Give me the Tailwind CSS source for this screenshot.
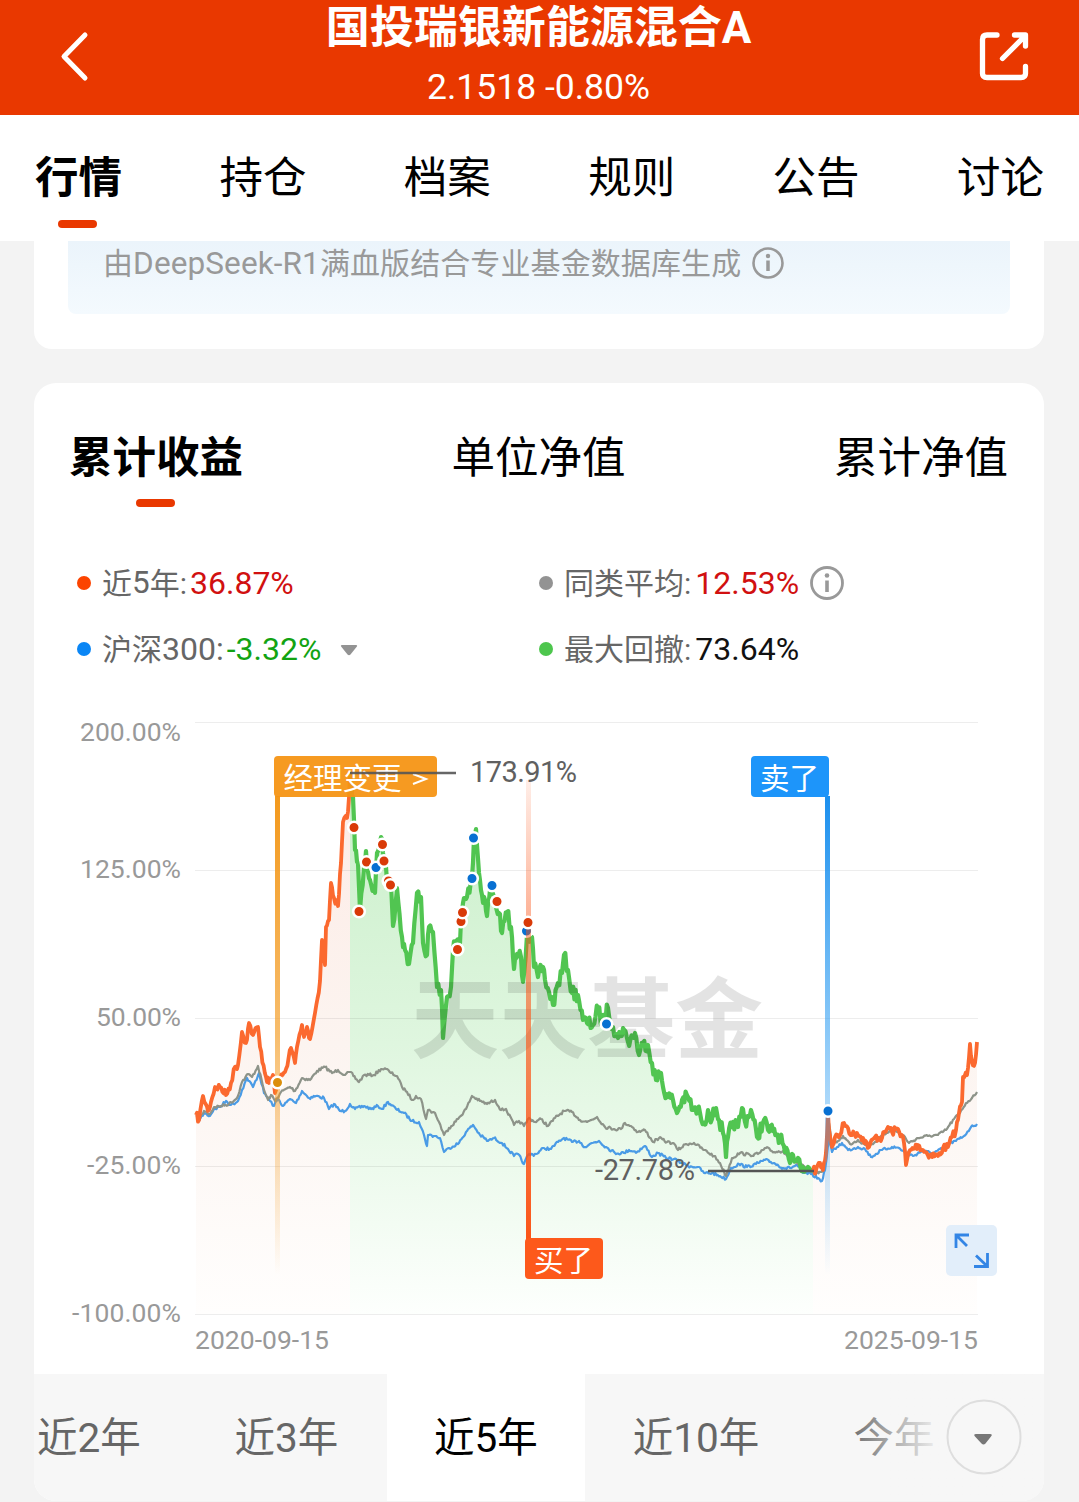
<!DOCTYPE html>
<html lang="zh-CN">

<head>
    <meta charset="UTF-8">
    <meta name="viewport" content="width=device-width, initial-scale=1.0">
    <title>国投瑞银新能源混合A</title>
    <script src="https://cdn.jsdelivr.net/npm/@tailwindcss/browser@4"></script>
</head>

<body class="bg-[#f3f3f3] w-full h-[1502px] overflow-hidden font-[Roboto,'Noto_Sans_CJK_SC',sans-serif]">
    <!-- Header -->
    <header class="h-[115px] bg-[#e93800] text-white flex justify-between">
        <svg class="w-[110px] h-[115px]" viewBox="0 0 110 115" fill="none" stroke="white" stroke-width="5" stroke-linecap="round" stroke-linejoin="round">
            <path d="M85 35 64 56.5 85 78" />
        </svg>
        <div class="flex flex-col items-center -ml-[2px]">
            <h1 class="pt-[2px] text-[44px] leading-[52px] font-bold whitespace-nowrap">国投瑞银新能源混合A</h1>
            <p class="mt-[12px] text-[35.500px] leading-[43px] whitespace-nowrap">2.1518 -0.80%</p>
        </div>
        <svg class="w-[110px] h-[115px]" viewBox="969 0 110 115" fill="none" stroke="white" stroke-width="5.300" stroke-linecap="round" stroke-linejoin="round">
            <path d="M997 35H987Q982.500 35 982.500 39.500V73.500Q982.500 77.500 987 77.500H1021Q1025.500 77.500 1025.500 73.500V66.500M1002.500 58.500 1025 36M1014.500 35H1025.500V46" />
        </svg>
    </header>

    <!-- Main tabs -->
    <nav class="h-[126px] bg-white px-[35px] pt-[36px] flex justify-between items-start text-black text-[43.500px] leading-[56px]">
        <a class="font-bold flex flex-col items-center">行情<i class="block mt-[13px] -ml-[2px] w-[39px] h-[8px] rounded-full bg-[#e93800]"></i></a>
        <a>持仓</a>
        <a>档案</a>
        <a>规则</a>
        <a>公告</a>
        <a>讨论</a>
    </nav>

    <main class="px-[34px] pr-[35px]">
        <section class="bg-white h-[108px] rounded-b-[18px] px-[34px]">
            <div class="h-[73px] rounded-b-[8px] bg-linear-to-b from-[#ebf4fb] to-[#f4fafe] pl-[35px] flex items-start gap-[10px] text-[#999]">
                <span class="text-[30px] leading-[46px] tracking-[0.1px]">由<span class="text-[31.500px]">DeepSeek-R1</span>满血版结合专业基金数据库生成</span>
                <svg class="w-[34px] h-[34px] mt-[5px]" viewBox="0 0 34 34" fill="none" stroke="#999" stroke-width="2.600">
                    <circle cx="17" cy="17" r="14.500" />
                    <path d="M17 14.500V25" stroke-width="3.500" />
                    <circle cx="17" cy="10" r="2.200" fill="#999" stroke="none" />
                </svg>
            </div>
        </section>

        <section class="mt-[34px] bg-white h-[1118px] rounded-[22px] overflow-hidden flex flex-col">
            <div class="h-[126px] pl-[35px] pr-[36px] pt-[47px] flex justify-between items-start text-black text-[43.500px] leading-[58px]">
                <a class="font-bold flex flex-col items-center">累计收益<i class="block mt-[11px] ml-[-2px] w-[39px] h-[8px] rounded-full bg-[#e93800]"></i></a>
                <a>单位净值</a>
                <a>累计净值</a>
            </div>

            <!-- Legend -->
            <div class="h-[191px] pt-[41px] pl-[43px] grid grid-cols-[462px_1fr] auto-rows-[66px] items-center text-[30px] text-[#666] whitespace-nowrap">
                <div class="flex items-center">
                    <i class="w-[14px] h-[14px] rounded-full bg-[#fc4400] mr-[11px]"></i>近<span class="text-[31.500px]">5</span>年:<span class="text-[32px] text-[#d11010] ml-[3px]">36.87%</span>
                </div>
                <div class="flex items-center">
                    <i class="w-[14px] h-[14px] rounded-full bg-[#939393] mr-[11px]"></i>同类平均:<span class="text-[32px] text-[#d11010] ml-[4px]">12.53%</span>
                    <svg class="w-[36px] h-[36px] ml-[10px]" viewBox="0 0 36 36" fill="none" stroke="#999" stroke-width="2.800">
                        <circle cx="18" cy="18" r="15.500" />
                        <path d="M18 15.500V27" stroke-width="3.600" />
                        <circle cx="18" cy="10.500" r="2.300" fill="#999" stroke="none" />
                    </svg>
                </div>
                <div class="flex items-center">
                    <i class="w-[14px] h-[14px] rounded-full bg-[#0a86f5] mr-[11px]"></i>沪深<span class="text-[32px]">300:</span><span class="text-[32px] text-[#12a312] ml-[3px]">-3.32%</span>
                    <svg class="w-[18px] h-[12px] ml-[19px] mt-[2px]" viewBox="0 0 18 12">
                        <path d="M2 1H16Q18 1 16.500 3L10.500 10.500Q9 12 7.500 10.500L1.500 3Q0 1 2 1Z" fill="#939393" />
                    </svg>
                </div>
                <div class="flex items-center">
                    <i class="w-[14px] h-[14px] rounded-full bg-[#4dc64d] mr-[11px]"></i>最大回撤:<span class="text-[32px] text-[#111] ml-[4px]">73.64%</span>
                </div>
            </div>

            <!-- Chart -->
            <svg class="w-[1010px] h-[674px] shrink-0" viewBox="34 700 1010 674" fill="none">
                <defs>
                    <linearGradient id="orangeArea" gradientUnits="userSpaceOnUse" x1="0" y1="773" x2="0" y2="1314">
                        <stop offset="0" stop-color="#fdebe5" />
                        <stop offset=".5" stop-color="#fcf4f0" />
                        <stop offset="1" stop-color="#fffefd" />
                    </linearGradient>
                    <linearGradient id="greenArea" gradientUnits="userSpaceOnUse" x1="0" y1="773" x2="0" y2="1314">
                        <stop offset="0" stop-color="#c9efc9" />
                        <stop offset=".5" stop-color="#dff6df" />
                        <stop offset="1" stop-color="#fdfffd" />
                    </linearGradient>
                    <linearGradient id="managerPole" gradientUnits="userSpaceOnUse" x1="0" y1="796" x2="0" y2="1275">
                        <stop offset="0" stop-color="#f3991d" />
                        <stop offset=".5" stop-color="#f3991d" stop-opacity=".65" />
                        <stop offset="1" stop-color="#f3991d" stop-opacity="0" />
                    </linearGradient>
                    <linearGradient id="sellPole" gradientUnits="userSpaceOnUse" x1="0" y1="796" x2="0" y2="1275">
                        <stop offset="0" stop-color="#1b8fee" />
                        <stop offset=".5" stop-color="#2d9df2" stop-opacity=".55" />
                        <stop offset="1" stop-color="#2d9df2" stop-opacity="0" />
                    </linearGradient>
                    <linearGradient id="buyPole" gradientUnits="userSpaceOnUse" x1="0" y1="780" x2="0" y2="1240">
                        <stop offset="0" stop-color="#fb5417" stop-opacity=".1" />
                        <stop offset=".3" stop-color="#fb5417" stop-opacity=".45" />
                        <stop offset="1" stop-color="#fb5417" />
                    </linearGradient>
                </defs>

                <path id="areaRise" fill="url(#orangeArea)" />
                <path id="areaFall" fill="url(#greenArea)" />
                <path id="areaTail" fill="url(#orangeArea)" />
                <path d="M195 722.500H978M195 870.500H978M195 1018.500H978M195 1166.500H978M195 1314.500H978" stroke="#000" stroke-opacity=".07" stroke-width="1.200" />

                <path id="lineIndex" stroke="#4a9be6" stroke-width="2.200" stroke-linejoin="round" />
                <path id="lineAverage" stroke="#8d9389" stroke-width="2.200" stroke-linejoin="round" />
                <path id="lineRise" stroke="#fb692f" stroke-width="3.800" stroke-linejoin="round" />
                <path id="lineFall" stroke="#51c551" stroke-width="4.200" stroke-linejoin="round" />
                <path id="lineTail" stroke="#fb692f" stroke-width="3.800" stroke-linejoin="round" />
                <text x="411" y="1051" font-size="88" font-weight="700" textLength="352" fill="#000" fill-opacity=".11">天天基金</text>

                <path d="M708 1171H814" stroke="#555" stroke-width="2.400" />

                <!-- Poles -->
                <rect x="275" y="796" width="5" height="479" fill="url(#managerPole)" />
                <rect x="825" y="796" width="5" height="479" fill="url(#sellPole)" />
                <g id="dots" stroke="#fff" stroke-width="2.600"></g>
                <rect x="526" y="780" width="5" height="460" fill="url(#buyPole)" />
                <circle cx="528" cy="922.500" r="5.800" fill="#d93a08" stroke="#fff" stroke-width="2.600" />

                <!-- Flags -->
                <rect x="274" y="756" width="163" height="41" rx="4" fill="#f59413" fill-opacity=".94" />
                <rect x="751" y="756" width="78" height="41" rx="4" fill="#1d95fa" />
                <rect x="525" y="1238" width="78" height="41" rx="4" fill="#fd591b" />
                <g font-size="29.500" font-weight="400" fill="#fff">
                    <text x="283.500" y="789">经理变更</text>
                    <text x="760" y="789">卖了</text>
                    <text x="534" y="1271">买了</text>
                </g>
                <path d="M413 774 426 779 413 784" stroke="#fff" stroke-width="2" />
                <path d="M350 773H456" stroke="#555" stroke-width="2.400" stroke-opacity=".9" />

                <g font-size="29" fill="#606060">
                    <text x="470" y="782" textLength="107">173.91%</text>
                    <text x="595" y="1180" textLength="100">-27.78%</text>
                </g>
                <g font-size="26.500" fill="#999">
                    <text x="80" y="741" textLength="101">200.00%</text>
                    <text x="80" y="878" textLength="101">125.00%</text>
                    <text x="96" y="1026" textLength="85">50.00%</text>
                    <text x="87" y="1174" textLength="94">-25.00%</text>
                    <text x="72" y="1322" textLength="109">-100.00%</text>
                    <text x="195" y="1349" textLength="134">2020-09-15</text>
                    <text x="844" y="1349" textLength="134">2025-09-15</text>
                </g>

                <!-- Full screen button -->
                <rect x="946" y="1225" width="51" height="51" rx="5" fill="#dfecf9" fill-opacity=".9" />
                <path d="M969 1235H956V1248M956 1235 967 1246M974 1266.500H987.500V1253M976 1255.500 987 1266" stroke="#3385e5" stroke-width="2.800" />
            </svg>

            <!-- Periods -->
            <div class="relative h-[127px] shrink-0 bg-[#f7f7f7] flex leading-[129px] text-[40.500px] text-[#666] text-center whitespace-nowrap">
                <a class="w-[198px] -ml-[44px] shrink-0">近2年</a>
                <a class="w-[199px] shrink-0 pr-[2px]">近3年</a>
                <a class="w-[198px] shrink-0 bg-white text-black">近5年</a>
                <a class="w-[222px] shrink-0">近10年</a>
                <a class="w-[176px] shrink-0 pr-[2px]">今年</a>
                <div class="absolute right-0 top-0 w-[200px] h-[127px] bg-linear-to-r from-[#f7f7f7]/0 to-[#f7f7f7] to-50%"></div>
                <svg class="absolute right-[22px] top-[25px] w-[76px] h-[76px]" viewBox="0 0 76 76">
                    <circle cx="38" cy="38" r="36.500" fill="#f7f7f7" stroke="#dedede" stroke-width="2" />
                    <path d="M30 35H44Q47 35 45 37.500L39.500 44.500Q37.500 46.500 35.500 44.500L29 37.500Q27 35 30 35Z" fill="#777" />
                </svg>
            </div>
        </section>
    </main>

    <script>
        const rise = '196,1115 199,1120 203,1096 208,1111 211,1102 215,1087 220,1087 226,1095 231,1083 235,1067 238,1065 242,1032 246,1043 249,1023 253,1035 258,1027 260,1047 266,1077 269,1083 273,1075 275,1093 280,1080 285,1072 291,1048 295,1063 297,1047 302,1025 304,1037 307,1027 310,1039 315,1013 320,981 322,940 325,965 326,927 329,920 331,883 334,898 338,906 341,863 343,822 347,818 349,797 350,773';
        const fall = '350,773 353,797 355,850 358,863 360,910 364,867 366,851 367,867 370,880 375,893 377,853 381,837 383,853 385,860 388,883 391,883 393,926 397,888 402,937 405,950 409,964 413,943 417,893 421,897 423,943 427,955 429,927 433,932 437,987 441,990 443,1038 447,997 451,987 453,950 455,942 460,943 461,920 464,898 467,897 472,877 474,838 476,829 479,873 482,895 485,900 487,916 490,890 495,900 499,913 502,933 507,912 511,927 514,969 517,954 521,957 523,982 527,935 532,937 534,967 538,977 543,967 545,980 549,992 553,1005 558,983 562,973 564,955 568,970 572,993 578,995 583,1020 587,1023 593,1025 598,1008 602,1023 608,1008 613,1027 618,1038 623,1028 628,1042 635,1033 639,1055 643,1043 648,1045 652,1063 656,1080 661,1073 663,1087 668,1097 673,1100 677,1113 682,1100 688,1097 693,1110 700,1113 704,1123 708,1110 712,1119 716,1108 719,1120 723,1133 726,1157 728,1137 733,1122 738,1127 742,1108 745,1122 751,1110 757,1137 764,1120 768,1130 773,1131 780,1137 785,1152 790,1163 793,1155 798,1158 803,1167 813,1171';
        const tail = '813,1171 816,1170 820,1163 823,1170 826,1153 828,1113 829,1130 832,1147 835,1137 840,1135 844,1123 848,1128 852,1135 857,1133 863,1138 869,1147 875,1137 882,1138 888,1127 892,1132 898,1129 903,1137 904,1143 906,1165 909,1152 918,1145 923,1150 930,1155 938,1156 943,1148 948,1147 952,1137 956,1130 959,1113 962,1102 963,1077 967,1075 970,1044 972,1062 975,1063 977,1042';
        const average = '196,1116 199,1120 204,1111 210,1114 214,1107 221,1106 229,1104 237,1098 242,1082 248,1074 252,1077 258,1066 264,1090 268,1100 271,1095 275,1101 281,1092 290,1087 295,1091 302,1078 310,1080 317,1071 325,1067 332,1073 338,1070 345,1075 350,1072 359,1082 364,1075 374,1075 381,1069 386,1069 391,1073 397,1076 402,1087 407,1092 412,1100 416,1096 421,1099 426,1119 428,1110 435,1113 439,1122 444,1135 449,1128 458,1119 466,1109 472,1096 480,1101 487,1104 495,1100 501,1110 506,1109 514,1125 519,1121 524,1126 529,1118 535,1122 541,1119 548,1126 555,1118 564,1111 572,1112 580,1120 587,1122 597,1117 605,1127 614,1129 621,1129 625,1123 631,1126 638,1132 645,1130 653,1142 659,1138 667,1142 673,1143 678,1150 686,1144 694,1143 704,1150 714,1156 720,1163 726,1176 732,1158 740,1153 750,1155 758,1154 766,1148 774,1152 783,1151 790,1158 798,1164 805,1167 815,1173 822,1172 825,1160 829,1123 832,1144 838,1141 843,1136 850,1144 858,1140 866,1145 874,1143 882,1136 890,1130 898,1132 905,1137 909,1143 918,1138 928,1136 938,1135 946,1130 954,1119 960,1113 966,1103 972,1098 977,1092';
        const index = '196,1117 199,1121 204,1113 210,1116 214,1109 220,1107 226,1101 231,1105 238,1101 242,1090 247,1078 253,1087 259,1073 264,1093 270,1101 274,1106 278,1099 283,1106 290,1099 296,1103 302,1091 309,1098 316,1096 324,1098 329,1109 334,1104 340,1111 345,1111 350,1104 355,1109 364,1106 371,1109 378,1106 382,1109 388,1102 396,1109 404,1113 412,1121 419,1122 424,1135 427,1146 428,1135 435,1136 440,1138 444,1152 449,1148 459,1143 466,1132 473,1125 480,1135 488,1141 494,1138 502,1143 508,1149 514,1156 518,1154 524,1164 528,1155 536,1154 544,1148 551,1149 558,1142 564,1138 572,1142 579,1141 585,1147 592,1143 599,1141 606,1147 615,1153 624,1153 629,1150 637,1152 645,1146 652,1157 658,1153 666,1158 674,1159 682,1163 688,1166 698,1167 704,1173 712,1173 720,1176 726,1179 731,1168 739,1164 747,1167 756,1164 765,1160 774,1163 783,1168 790,1168 797,1165 803,1173 811,1174 822,1181 825,1170 829,1138 832,1152 837,1147 842,1143 848,1150 858,1147 865,1149 871,1157 882,1150 892,1147 899,1148 906,1153 913,1156 922,1151 933,1153 942,1149 950,1143 956,1141 964,1136 971,1127 977,1124';

        // Adds small daily moves between the given points
        function toPath(points, amount) {
            const list = points.split(' ').map(p => p.split(',').map(Number));
            let d = 'M' + list[0];
            let seed = 7;
            for (let i = 1; i < list.length; i++) {
                const [x0, y0] = list[i - 1];
                const [x1, y1] = list[i];
                const steps = Math.max(1, Math.round((x1 - x0) / 1.2));
                for (let k = 1; k < steps; k++) {
                    seed = (seed * 16807) % 2147483647;
                    const noise = (seed / 2147483647 - 0.5) * amount;
                    d += 'L' + (x0 + (x1 - x0) * k / steps).toFixed(1) + ' ' + (y0 + (y1 - y0) * k / steps + noise).toFixed(1);
                }
                d += 'L' + x1 + ' ' + y1;
            }
            return d;
        }

        function draw(id, points, amount) {
            document.getElementById(id).setAttribute('d', toPath(points, amount));
        }

        draw('lineRise', rise, 8);
        draw('lineFall', fall, 14);
        draw('lineTail', tail, 8);
        draw('lineAverage', average, 3);
        draw('lineIndex', index, 3);
        document.getElementById('areaRise').setAttribute('d', toPath(rise, 0) + 'V1314H196Z');
        document.getElementById('areaFall').setAttribute('d', toPath(fall, 0) + 'V1314H350Z');
        document.getElementById('areaTail').setAttribute('d', toPath(tail, 0) + 'V1314H813Z');

        // x, y, colour of each trade
        const red = '#d93a08', blue = '#0870d2';
        const dots = [
            [277.5, 1082.5, '#dc8e0b'], [354, 827.5, red], [359, 911.5, red], [366.5, 862, red], [376, 867.5, blue],
            [382.5, 844.5, red], [384, 861, red], [388.5, 881, red], [390.5, 885, red], [457.5, 949.5, red],
            [461, 921.5, red], [462.5, 912.5, red], [472, 878.5, blue], [473.5, 838, blue], [492, 885.5, blue],
            [497, 901.5, red], [526.5, 931, blue], [606.5, 1024, blue], [828, 1111, blue]
        ];
        document.getElementById('dots').innerHTML = dots.map(([x, y, c]) => `<circle cx="${x}" cy="${y}" r="5.8" fill="${c}" />`).join('');
    </script>
</body>

</html>
